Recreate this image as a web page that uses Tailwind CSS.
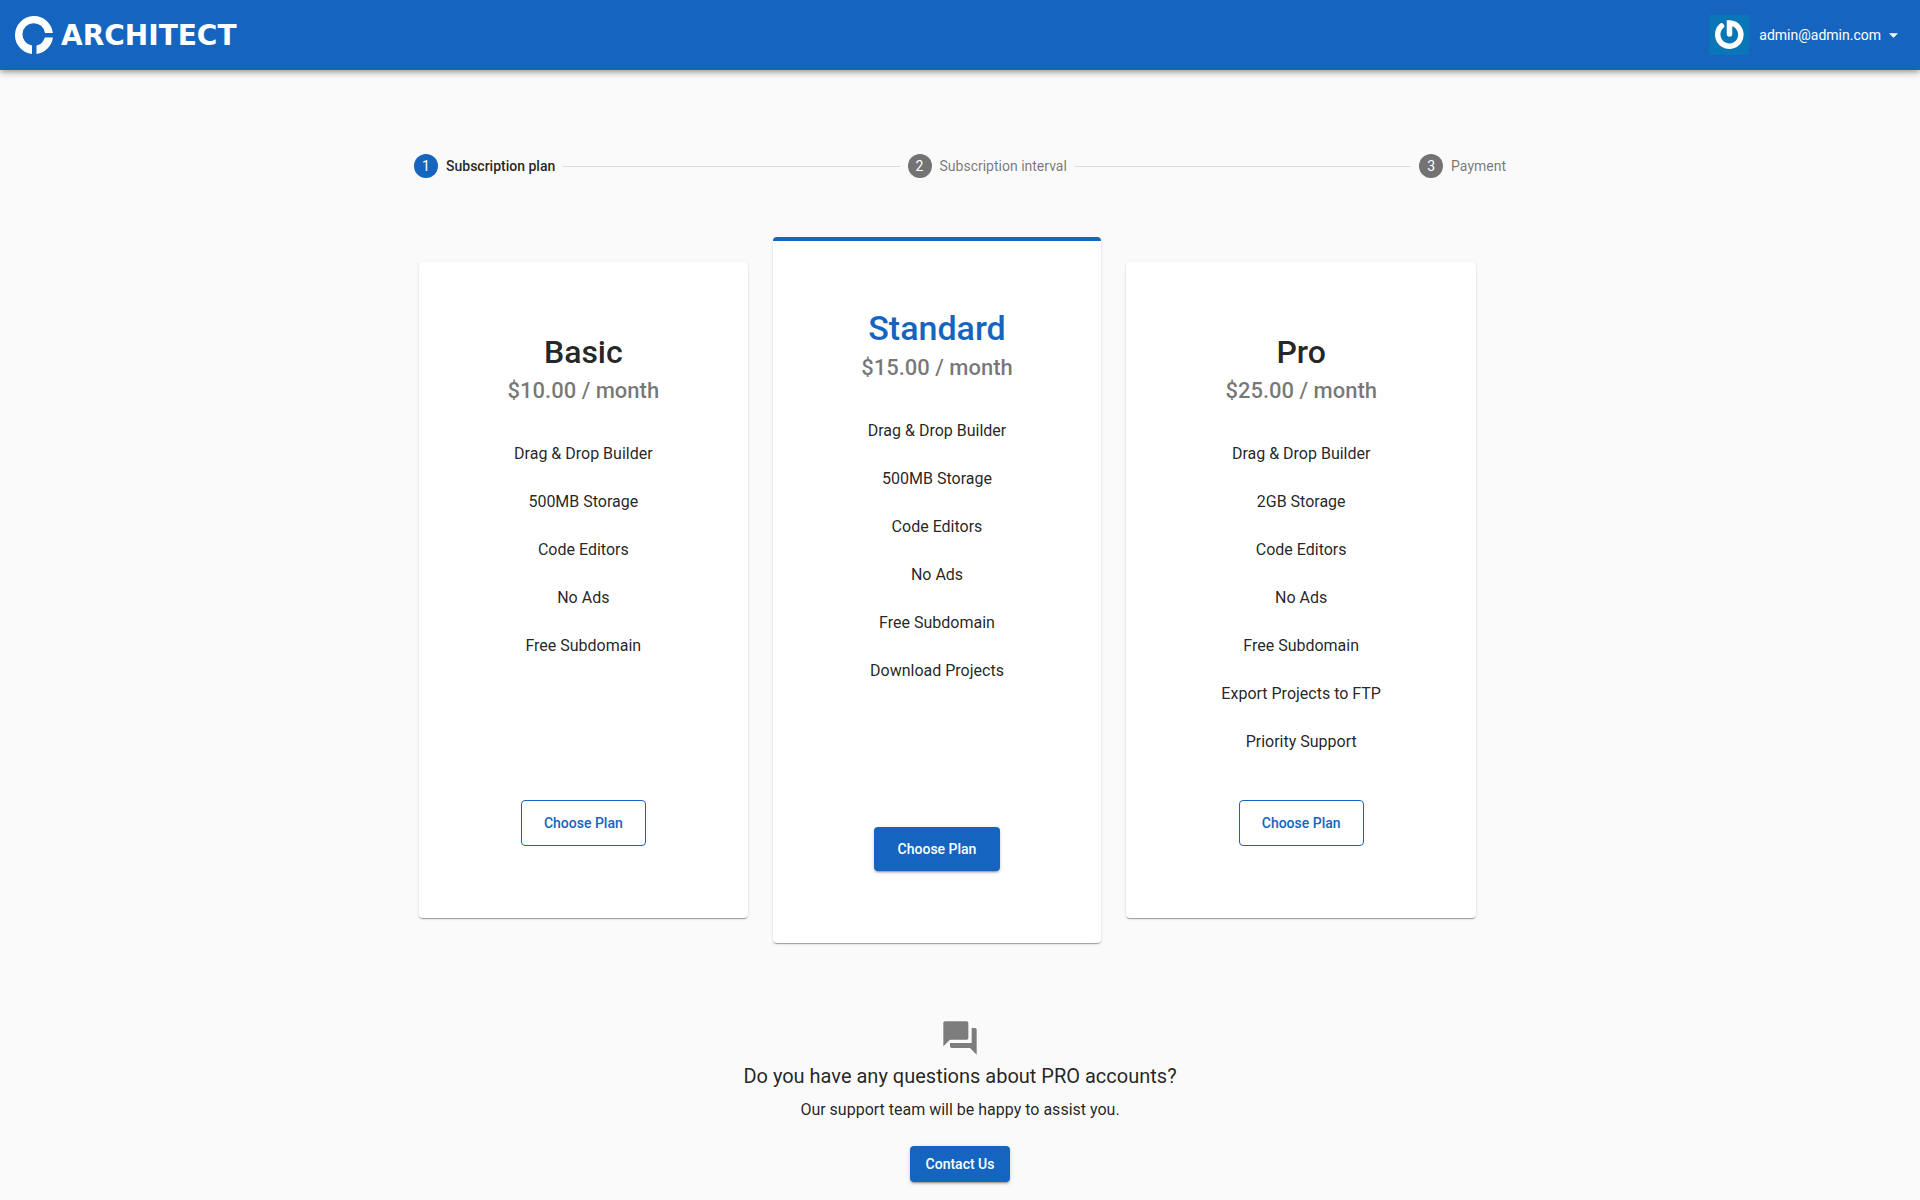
<!DOCTYPE html>
<html lang="en">
<head>
    <meta charset="UTF-8">
    <meta name="viewport" content="width=device-width, initial-scale=1.0">
    <title>Architect - Upgrade</title>
    <script src="https://cdn.jsdelivr.net/npm/@tailwindcss/browser@4"></script>
</head>
<body class="min-h-screen bg-[#fafafa] font-[Roboto,sans-serif] text-base text-black/87">
    <header class="relative flex h-[70px] items-center justify-between bg-[#1565c0] pr-[22px] pl-[15px] text-white shadow-[0_2px_4px_-1px_rgba(0,0,0,0.2),0_4px_5px_rgba(0,0,0,0.14),0_1px_10px_rgba(0,0,0,0.12)]">
        <a href="#" class="flex items-center gap-2">
            <svg class="size-[38px]" viewBox="0 0 38 38" fill="currentColor" aria-hidden="true">
                <path d="M17 38A19 19 0 1 1 37.9 17H30A11.300 11.300 0 1 0 17 29.600ZM21.500 38V29.600A11.300 11.300 0 0 0 29.800 21.500H37.900A19 19 0 0 1 21.500 38Z"/>
            </svg>
            <span class="pt-0.5 font-['DejaVu_Sans',sans-serif] text-[28px] leading-9 font-bold">ARCHITECT</span>
        </a>
        <button type="button" class="flex items-center text-sm">
            <svg class="mr-2.5 size-10" viewBox="0 0 40 40" fill="none" stroke="#fff" stroke-width="5.500" stroke-linecap="round" aria-hidden="true">
                <path fill="#0a76b8" stroke="none" d="M0 0H40V40H0Z"/>
                <path d="M12.500 11A11.600 11.600 0 1 0 20.500 8V19"/>
            </svg>
            admin@admin.com
            <svg class="ml-2 h-[5px] w-[9px]" viewBox="0 0 10 5" fill="currentColor" aria-hidden="true"><path d="M0 0H10L5 5Z"/></svg>
        </button>
    </header>

    <main class="mx-auto max-w-[1140px] px-6 pt-[84px]">
        <!-- Steps -->
        <ol class="flex items-center gap-2 text-sm text-black/54">
            <li class="flex items-center gap-2 font-medium text-black/87">
                <span class="flex size-6 items-center justify-center rounded-full bg-[#1565c0] font-normal text-white">1</span>
                Subscription plan
            </li>
            <li class="h-px flex-1 bg-black/12" aria-hidden="true"></li>
            <li class="flex items-center gap-2">
                <span class="flex size-6 items-center justify-center rounded-full bg-[#737373] text-white">2</span>
                Subscription interval
            </li>
            <li class="h-px flex-1 bg-black/12" aria-hidden="true"></li>
            <li class="flex items-center gap-2">
                <span class="flex size-6 items-center justify-center rounded-full bg-[#737373] text-white">3</span>
                Payment
            </li>
        </ol>

        <!-- Plans -->
        <div class="mt-[84px] grid grid-cols-[47fr_47fr_50fr] gap-[25px] pr-[30px] pl-[5px] text-center">
            <section class="flex flex-col items-center rounded bg-white pt-[70px] pb-[72px] shadow-[0_2px_1px_-1px_rgba(0,0,0,0.2),0_1px_1px_rgba(0,0,0,0.14),0_1px_3px_rgba(0,0,0,0.12)]">
                <h2 class="text-[32px] leading-10 font-medium">Basic</h2>
                <p class="mt-[5px] text-[22px] leading-7 font-medium text-black/54">$10.00 / month</p>
                <ul class="mt-[25px] flex-1 leading-[48px]">
                    <li>Drag &amp; Drop Builder</li>
                    <li>500MB Storage</li>
                    <li>Code Editors</li>
                    <li>No Ads</li>
                    <li>Free Subdomain</li>
                </ul>
                <button type="button" class="mt-[34px] h-[46px] rounded border border-[#1565c0] px-[22px] text-sm font-medium text-[#1565c0]">Choose Plan</button>
            </section>

            <section class="-my-[25px] flex flex-col items-center rounded border-t-4 border-[#1565c0] bg-white pt-[67px] pb-[72px] shadow-[0_2px_1px_-1px_rgba(0,0,0,0.2),0_1px_1px_rgba(0,0,0,0.14),0_1px_3px_rgba(0,0,0,0.12)]">
                <h2 class="text-[34px] leading-10 font-medium text-[#1565c0]">Standard</h2>
                <p class="mt-1.5 text-[22px] leading-7 font-medium text-black/54">$15.00 / month</p>
                <ul class="mt-[25px] flex-1 leading-[48px]">
                    <li>Drag &amp; Drop Builder</li>
                    <li>500MB Storage</li>
                    <li>Code Editors</li>
                    <li>No Ads</li>
                    <li>Free Subdomain</li>
                    <li>Download Projects</li>
                </ul>
                <button type="button" class="mt-[34px] h-11 rounded bg-[#1565c0] px-6 text-sm font-medium text-white shadow-[0_3px_1px_-2px_rgba(0,0,0,0.2),0_2px_2px_rgba(0,0,0,0.14),0_1px_5px_rgba(0,0,0,0.12)]">Choose Plan</button>
            </section>

            <section class="flex flex-col items-center rounded bg-white pt-[70px] pb-[72px] shadow-[0_2px_1px_-1px_rgba(0,0,0,0.2),0_1px_1px_rgba(0,0,0,0.14),0_1px_3px_rgba(0,0,0,0.12)]">
                <h2 class="text-[32px] leading-10 font-medium">Pro</h2>
                <p class="mt-[5px] text-[22px] leading-7 font-medium text-black/54">$25.00 / month</p>
                <ul class="mt-[25px] flex-1 leading-[48px]">
                    <li>Drag &amp; Drop Builder</li>
                    <li>2GB Storage</li>
                    <li>Code Editors</li>
                    <li>No Ads</li>
                    <li>Free Subdomain</li>
                    <li>Export Projects to FTP</li>
                    <li>Priority Support</li>
                </ul>
                <button type="button" class="mt-[34px] h-[46px] rounded border border-[#1565c0] px-[22px] text-sm font-medium text-[#1565c0]">Choose Plan</button>
            </section>
        </div>

        <!-- Support -->
        <section class="mt-[100px] flex flex-col items-center pb-4 text-center">
            <svg class="size-10 text-black/50" viewBox="0 0 24 24" fill="currentColor" aria-hidden="true">
                <path d="M21 6h-2v9H6v2c0 .55.45 1 1 1h11l4 4V7c0-.55-.45-1-1-1zm-4 6V3c0-.55-.45-1-1-1H3c-.55 0-1 .45-1 1v14l4-4h10c.55 0 1-.45 1-1z"/>
            </svg>
            <h2 class="mt-1 text-xl">Do you have any questions about PRO accounts?</h2>
            <p class="mt-2">Our support team will be happy to assist you.</p>
            <button type="button" class="mt-6 h-9 rounded bg-[#1565c0] px-4 text-sm font-medium text-white shadow-[0_3px_1px_-2px_rgba(0,0,0,0.2),0_2px_2px_rgba(0,0,0,0.14),0_1px_5px_rgba(0,0,0,0.12)]">Contact Us</button>
        </section>
    </main>
</body>
</html>
